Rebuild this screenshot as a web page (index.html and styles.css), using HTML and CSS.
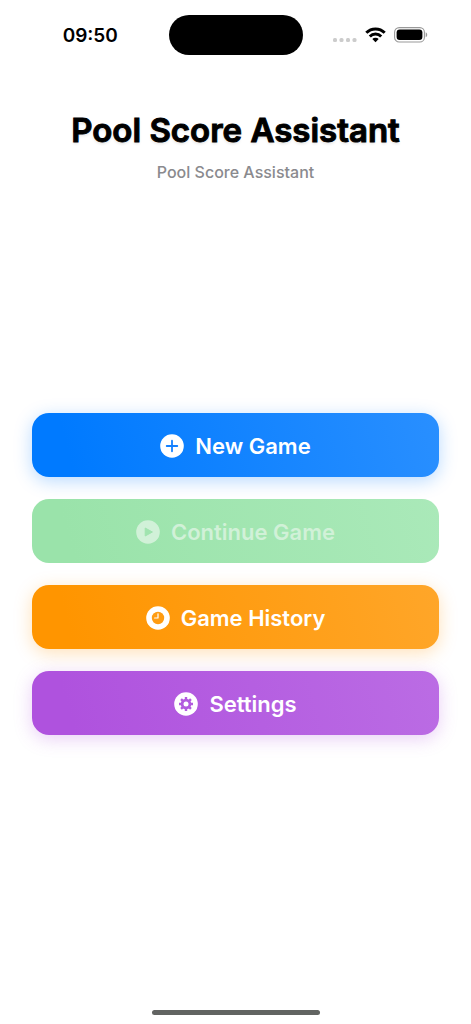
FILE: index.html
```html
<!DOCTYPE html>
<html lang="en">
<head>
<meta charset="utf-8">
<meta name="viewport" content="width=device-width, initial-scale=1">
<title>Pool Score Assistant</title>
<link rel="stylesheet" href="styles.css">
</head>
<body>
<div class="screen">
  <div class="status-bar">
    <time class="clock">09:50</time>
    <div class="island"></div>
    <div class="indicators">
      <svg class="cellular" width="24" height="16" viewBox="0 0 24 16" aria-hidden="true">
        <g fill="#cccccc"><rect x="0" y="11" width="4" height="4" rx="1.5"/><rect x="6.5" y="11" width="4" height="4" rx="1.5"/><rect x="13" y="11" width="4" height="4" rx="1.5"/><rect x="19.5" y="11" width="4" height="4" rx="1.5"/></g>
      </svg>
      <svg class="wifi" width="21" height="16" viewBox="0 0 21 16" aria-hidden="true">
        <g fill="none" stroke="#000" stroke-width="3"><path d="M1.3 5.7a13 13 0 0 1 18.4 0"/><path d="M4.8 9.5a8 8 0 0 1 11.4 0"/></g>
        <path d="M7.3 12.1a4.6 4.6 0 0 1 6.4 0l-3.2 3.2z"/>
      </svg>
      <svg class="battery" width="34" height="16" viewBox="0 0 34 16" aria-hidden="true">
        <rect x=".6" y=".6" width="29.8" height="14.4" rx="4.6" fill="none" stroke="#999" stroke-width="1.1"/>
        <rect x="2.6" y="2.6" width="25.8" height="10.4" rx="3"/>
        <path d="M31.7 5.3c2 .8 2 4.200 0 5z" fill="#999"/>
      </svg>
    </div>
  </div>
  <header class="heading">
    <h1 class="title">Pool Score Assistant</h1>
    <p class="subtitle">Pool Score Assistant</p>
  </header>
  <main class="menu">
    <button class="action new-game" type="button">
      <svg class="icon" viewBox="0 0 24 24" aria-hidden="true"><circle cx="12" cy="12" r="11.8" fill="#fff"/><path d="M12 6.700v10.600M6.700 12h10.600" stroke="#1380ff" stroke-width="1.8" stroke-linecap="round"/></svg>
      <span>New Game</span>
    </button>
    <button class="action continue-game" type="button" disabled>
      <svg class="icon" viewBox="0 0 24 24" aria-hidden="true"><circle cx="12" cy="12" r="11.8" fill="#d1f1d8"/><path d="M9.200 8v8l7.200-4z" fill="#a0e4af" stroke="#a0e4af" stroke-linejoin="round"/></svg>
      <span>Continue Game</span>
    </button>
    <button class="action history" type="button">
      <svg class="icon" viewBox="0 0 24 24" aria-hidden="true"><circle cx="12" cy="12" r="11.8" fill="#fff"/><circle cx="12" cy="12" r="6.200" fill="#ff9c12"/><path d="M12 7.800V12H8.600" fill="none" stroke="#fff" stroke-width="1.200" stroke-linecap="round" stroke-linejoin="round"/></svg>
      <span>Game History</span>
    </button>
    <button class="action settings" type="button">
      <svg class="icon" viewBox="0 0 24 24" aria-hidden="true"><circle cx="12" cy="12" r="11.8" fill="#fff"/><g stroke="#b25bdf" fill="none"><circle cx="12" cy="12" r="3.900" stroke-width="2.800"/><path d="M12 5v14M5 12h14M7.050 7.050l9.900 9.900M16.950 7.050l-9.900 9.900" stroke-width="2.400"/></g><circle cx="12" cy="12" r="2.500" fill="#fff"/></svg>
      <span>Settings</span>
    </button>
  </main>
  <div class="home-indicator"></div>
</div>
</body>
</html>
```
FILE: styles.css
```css
* {
  box-sizing: border-box;
}

body {
  margin: 0;
  background: #fff;
  color: #000;
  font-family: Inter, Roboto, sans-serif;
}

.screen {
  display: flex;
  flex-direction: column;
  min-height: 100vh;
}

.status-bar {
  display: grid;
  grid-template-columns: 1fr 134px 1fr;
  align-items: center;
  padding-top: 15px;
}

.clock {
  padding: 2px 0 0 12px;
  text-align: center;
  font-size: 19px;
  font-weight: 600;
  line-height: 24px;
}

.island {
  height: 40px;
  border-radius: 20px;
  background: #000;
}

.indicators {
  display: flex;
  justify-content: center;
  align-items: center;
  gap: 8px;
  padding-right: 12px;
}

.heading {
  padding-top: 53px;
  text-align: center;
}

.title {
  margin: 0;
  font-size: 33px;
  font-weight: 600;
  line-height: 44px;
  -webkit-text-stroke: 1px #000;
  text-shadow: 0 2px 3px rgba(0, 0, 0, 0.1);
}

.subtitle {
  margin: 10px 0 0;
  color: #8a8a8e;
  font-size: 16px;
  font-weight: 500;
  line-height: 20px;
}

.menu {
  display: flex;
  flex: 1;
  flex-direction: column;
  justify-content: center;
  gap: 22px;
  padding: 0 32px 44px;
}

.action {
  display: flex;
  justify-content: center;
  align-items: center;
  gap: 11px;
  min-height: 64px;
  padding: 2px 16px 0;
  border: 0;
  border-radius: 17px;
  color: #fff;
  font: inherit;
  font-size: 22px;
  font-weight: 600;
  line-height: 28px;
}

.icon {
  width: 24px;
  height: 24px;
}

.new-game {
  background: linear-gradient(75deg, #007aff 10%, #298fff);
  box-shadow: 0 4px 18px rgba(0, 122, 255, 0.28);
}

.continue-game {
  background: linear-gradient(75deg, #9ae3aa 10%, #aae9b9);
  color: #d1f1d8;
}

.history {
  background: linear-gradient(75deg, #ff9500 10%, #ffa629);
  box-shadow: 0 4px 18px rgba(255, 149, 0, 0.28);
}

.settings {
  background: linear-gradient(75deg, #af52de 10%, #bb6ce4);
  box-shadow: 0 4px 18px rgba(175, 82, 222, 0.28);
}

.home-indicator {
  align-self: center;
  width: 168px;
  height: 5px;
  margin-bottom: 9px;
  border-radius: 3px;
  background: #626462;
}
```
